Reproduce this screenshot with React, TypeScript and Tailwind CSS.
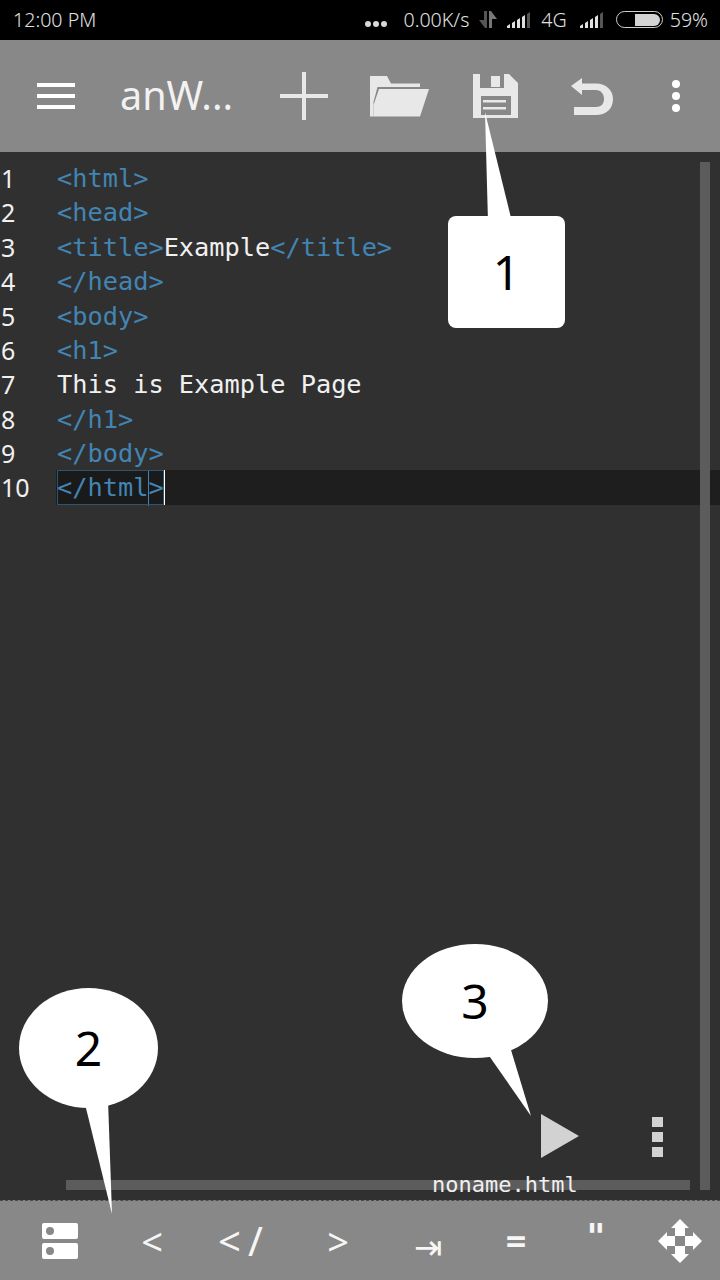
const codeLines = [
  [{ t: "<html>", c: "tag" }],
  [{ t: "<head>", c: "tag" }],
  [
    { t: "<title>", c: "tag" },
    { t: "Example", c: "txt" },
    { t: "</title>", c: "tag" },
  ],
  [{ t: "</head>", c: "tag" }],
  [{ t: "<body>", c: "tag" }],
  [{ t: "<h1>", c: "tag" }],
  [{ t: "This is Example Page", c: "txt" }],
  [{ t: "</h1>", c: "tag" }],
  [{ t: "</body>", c: "tag" }],
];

const Signal = () => (
  <svg className="block" width="24" height="16" viewBox="0 0 24 16" fill="#e0e0e0">
    <path d="M0 16v-2l3-2v4zM5 16v-5l3-2v7zM10 16V8l3-2v10zM15 16V5l3-2v13z" />
    <path d="M20 16V2l3-2v16z" fill="#555" />
  </svg>
);

const Bubble = ({ n, className }: { n: string; className: string }) => (
  <div
    className={`absolute flex items-center justify-center bg-white text-black text-[48px] font-['Noto_Sans',sans-serif] ${className}`}
  >
    {n}
  </div>
);

export default function App() {
  return (
    <div className="relative flex h-[1280px] w-[720px] flex-col overflow-hidden bg-[#303030]">
      {/* status bar */}
      <div className="flex h-[40px] shrink-0 items-center bg-black pl-[13px] pr-[12px] font-['Noto_Sans',sans-serif] text-[19.600px] font-light text-[#e0e0e0]">
        <span>12:00 PM</span>
        <div className="ml-auto flex items-center">
          <span className="mr-[16px] mt-[8px] flex gap-[2px]">
            <i className="h-[6px] w-[6px] rounded-full bg-[#d8d8d8]" />
            <i className="h-[6px] w-[6px] rounded-full bg-[#d8d8d8]" />
            <i className="h-[6px] w-[6px] rounded-full bg-[#d8d8d8]" />
          </span>
          <span>0.00K/s</span>
          <svg className="ml-[10px]" width="18" height="17" viewBox="0 0 18 17">
            <path d="M5 0h3v17H6L0 9h5z" fill="#555" />
            <path d="M10 0h2l6 8h-5v9h-3z" fill="#777" />
          </svg>
          <span className="ml-[10px]">
            <Signal />
          </span>
          <span className="ml-[10px]">4G</span>
          <span className="ml-[13px]">
            <Signal />
          </span>
          <div className="ml-[12px] flex h-[17px] w-[47px] items-center justify-end rounded-full border-[1.500px] border-[#cfcfcf] p-[2px]">
            <div className="h-[12px] w-[25px] rounded-r-full bg-[#d4d4d4]" />
          </div>
          <span className="ml-[7px]">59%</span>
        </div>
      </div>

      {/* toolbar */}
      <div className="flex h-[112px] shrink-0 items-center bg-[#888888]">
        <div className="ml-[37px] flex w-[38px] flex-col gap-[7px]">
          <i className="h-[4px] bg-white" />
          <i className="h-[4px] bg-white" />
          <i className="h-[4px] bg-white" />
        </div>
        <span className="ml-[45px] w-[160px] font-['Noto_Sans',sans-serif] text-[39.500px] leading-none text-[#f2f2f2]">
          anW...
        </span>
        <svg width="48" height="48" viewBox="0 0 48 48" fill="#e8e8e8">
          <path d="M22 0h4v22h22v4H26v22h-4V26H0v-4h22z" />
        </svg>
        <svg className="ml-[42px]" width="59" height="41" viewBox="0 0 59 41" fill="#e8e8e8">
          <path d="M0 0H17L21 7.500H50V11H7.500L3.500 26V40.500H0Z" />
          <path d="M9 13H59L50 40.500H3.500V29Z" />
        </svg>
        <svg className="ml-[44px]" width="45" height="44" viewBox="0 0 45 44" fill="#e8e8e8">
          <path
            fillRule="evenodd"
            d="M0 0H7V14H31V0H36L45 9V44H0ZM8 22V41H38V22ZM10 26H33V28.500H10ZM10 33H33V35.500H10Z"
          />
          <path d="M18 2h9v11h-9z" />
        </svg>
        <svg className="ml-[53px]" width="42" height="37" viewBox="0 0 42 37" fill="#e8e8e8">
          <path d="M0 8L11 0V5.500H25C35 5.500 42 12 42 21C42 31 35 37 25 37H3V29H25C30 29 33 26 33 21C33 16 30 12 25 12H11V17Z" />
        </svg>
        <div className="ml-[59px] flex flex-col gap-[4px]">
          <i className="h-[8px] w-[8px] rounded-full bg-white" />
          <i className="h-[8px] w-[8px] rounded-full bg-white" />
          <i className="h-[8px] w-[8px] rounded-full bg-white" />
        </div>
      </div>

      {/* editor */}
      <div className="relative flex-1 pt-[10px] font-['DejaVu_Sans_Mono',monospace] text-[25.300px] leading-[34.400px]">
        {codeLines.map((parts, i) => (
          <div key={i} className="flex h-[34.400px]">
            <span className="w-[57px] shrink-0 pl-[1px] font-['Noto_Sans',sans-serif] text-[25px] leading-[32px] text-[#f0f0f0]">
              {i + 1}
            </span>
            <span className="whitespace-pre">
              {parts.map((p, j) => (
                <span key={j} className={p.c === "tag" ? "text-[#4285b4]" : "text-[#f0f0f0]"}>
                  {p.t}
                </span>
              ))}
            </span>
          </div>
        ))}
        <div className="-mt-[2px] flex h-[35px] bg-[linear-gradient(90deg,#303030_56px,#1e1e1e_56px)] leading-[36px]">
          <span className="w-[57px] shrink-0 pl-[1px] font-['Noto_Sans',sans-serif] text-[25px] leading-[34px] text-[#f0f0f0]">
            10
          </span>
          <span className="whitespace-pre bg-[#1a1a1a] text-[#4285b4] outline outline-1 -outline-offset-1 outline-[#2d5572]">
            {"</html"}
            <span className="inline-block shadow-[inset_1px_0_0_#3d85bd]">{">"}</span>
          </span>
          <span className="h-full w-[1px] bg-white" />
        </div>

        {/* scrollbars */}
        <div className="absolute left-[700px] top-[10px] h-[1028px] w-[10px] bg-[#5c5c5c]" />
        <div className="absolute left-[66px] top-[1028px] h-[10px] w-[624px] bg-[#5c5c5c]" />

        {/* run */}
        <svg className="absolute left-[540px] top-[962px]" width="40" height="45" viewBox="0 0 40 45" fill="#d2d2d2">
          <path d="M1 0l38 22L1 44z" />
        </svg>
        <div className="absolute left-[652px] top-[965px] flex flex-col gap-[5px]">
          <i className="h-[10px] w-[11px] bg-[#d2d2d2]" />
          <i className="h-[10px] w-[11px] bg-[#d2d2d2]" />
          <i className="h-[10px] w-[11px] bg-[#d2d2d2]" />
        </div>
        <span className="absolute left-[432px] top-[1020px] text-[22px] leading-[26px] text-[#f0f0f0]">
          noname.html
        </span>
      </div>

      {/* bottom keys */}
      <div className="flex h-[80px] shrink-0 items-center border-t border-dashed border-t-[#4a4a4a] bg-[#888888] text-center font-['Noto_Sans',sans-serif] leading-none text-[#f6f6f6]">
        <div className="flex w-[120px] justify-center">
          <div className="flex w-[36px] flex-col gap-[4px]">
            {[0, 1].map((k) => (
              <div key={k} className="flex h-[16px] items-center rounded-[2px] bg-white pl-[4px]">
                <i className="h-[8px] w-[8px] rounded-full bg-[#888888]" />
              </div>
            ))}
          </div>
        </div>
        <span className="w-[64px] text-[38px]">{"<"}</span>
        <span className="w-[120px] text-[40px] tracking-[7px]">{"</"}</span>
        <span className="w-[68px] text-[38px]">{">"}</span>
        <span className="mt-[12px] w-[112px] font-['DejaVu_Sans',sans-serif] text-[34px] font-extralight">{"\u21E5"}</span>
        <span className="w-[64px] text-[36px] font-bold">=</span>
        <span className="mb-[8px] w-[96px] font-['DejaVu_Sans',sans-serif] text-[36px] font-bold">"</span>
        <div className="flex w-[72px] justify-center">
          <svg width="44" height="44" viewBox="0 0 44 44" fill="#ffffff">
            <path d="M22 0l9 9h-4v8H17V9h-4zM22 44l-9-9h4v-8h10v8h4zM0 22l9-9v4h8v10H9v4zM44 22l-9 9v-4h-8V17h8v-4z" />
          </svg>
        </div>
      </div>

      {/* callouts */}
      <svg className="absolute left-0 top-0" width="720" height="1280" viewBox="0 0 720 1280" fill="#ffffff">
        <path d="M485 112l3 110h24z" />
        <path d="M84 1100l28 114-4-114z" />
        <path d="M485 1050l46 66-20-66z" />
      </svg>
      <Bubble n="1" className="left-[448px] top-[216px] h-[112px] w-[117px] rounded-[8px]" />
      <Bubble n="2" className="left-[19px] top-[988px] h-[120px] w-[139px] rounded-[50%]" />
      <Bubble n="3" className="left-[402px] top-[944px] h-[114px] w-[146px] rounded-[50%]" />
    </div>
  );
}
